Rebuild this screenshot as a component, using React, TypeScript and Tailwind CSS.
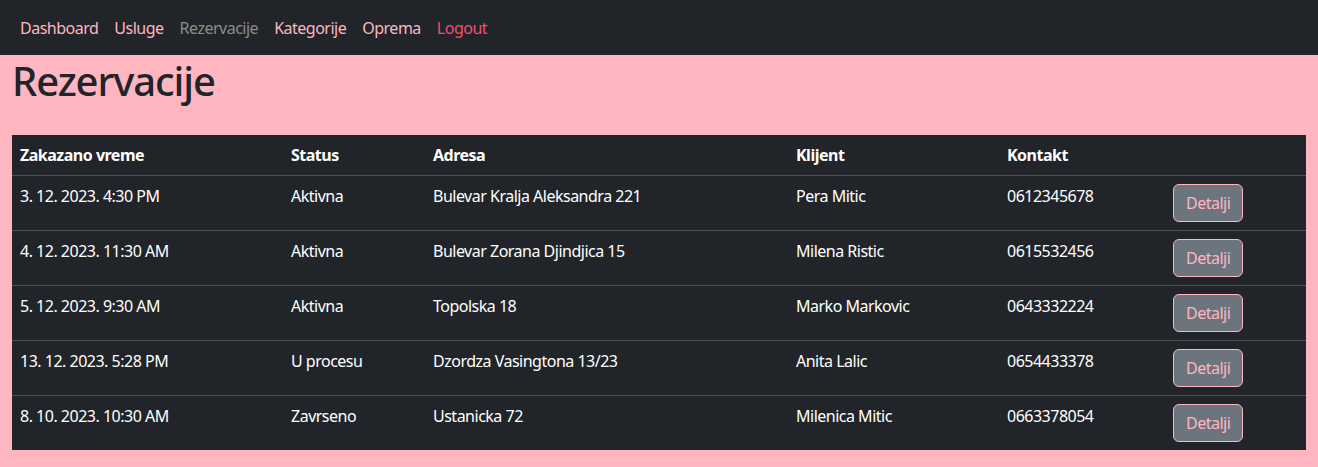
import React from 'react';

const reservations = [
  { time: '3. 12. 2023. 4:30 PM', status: 'Aktivna', address: 'Bulevar Kralja Aleksandra 221', client: 'Pera Mitic', phone: '0612345678' },
  { time: '4. 12. 2023. 11:30 AM', status: 'Aktivna', address: 'Bulevar Zorana Djindjica 15', client: 'Milena Ristic', phone: '0615532456' },
  { time: '5. 12. 2023. 9:30 AM', status: 'Aktivna', address: 'Topolska 18', client: 'Marko Markovic', phone: '0643332224' },
  { time: '13. 12. 2023. 5:28 PM', status: 'U procesu', address: 'Dzordza Vasingtona 13/23', client: 'Anita Lalic', phone: '0654433378' },
  { time: '8. 10. 2023. 10:30 AM', status: 'Zavrseno', address: 'Ustanicka 72', client: 'Milenica Mitic', phone: '0663378054' },
];

const navLinks = [
  { label: 'Dashboard', cls: 'text-[#ffb6c1]' },
  { label: 'Usluge', cls: 'text-[#ffb6c1]' },
  { label: 'Rezervacije', cls: 'text-[#8c8c8c]' },
  { label: 'Kategorije', cls: 'text-[#ffb6c1]' },
  { label: 'Oprema', cls: 'text-[#ffb6c1]' },
  { label: 'Logout', cls: 'text-[#f0506e]' },
];

export default function App() {
  return (
    <div className="min-h-[467px] bg-[#ffb6c1] font-['Noto_Sans',sans-serif] text-base leading-6 tracking-[-0.5px]">
      {/* Navbar */}
      <nav className="h-[55px] bg-[#212529] flex items-center px-3">
        {navLinks.map((l) => (
          <a key={l.label} href="#" className={`px-2 ${l.cls}`}>
            {l.label}
          </a>
        ))}
      </nav>

      {/* Content */}
      <div className="px-3">
        <h1 className="text-[40px] leading-[48px] font-medium tracking-[-1.1px] text-[#212529] pt-[2px] mb-[30px]">Rezervacije</h1>

        <table className="w-full table-fixed border-collapse bg-[#212529] text-white">
          <colgroup>
            <col className="w-[271px]" />
            <col className="w-[142px]" />
            <col className="w-[363px]" />
            <col className="w-[211px]" />
            <col className="w-[166px]" />
            <col />
          </colgroup>
          <thead>
            <tr className="border-b border-[#4d5154]">
              <th className="text-left font-bold px-2 py-2">Zakazano vreme</th>
              <th className="text-left font-bold px-2 py-2">Status</th>
              <th className="text-left font-bold px-2 py-2">Adresa</th>
              <th className="text-left font-bold px-2 py-2">Klijent</th>
              <th className="text-left font-bold px-2 py-2">Kontakt</th>
              <th className="px-2 py-2"></th>
            </tr>
          </thead>
          <tbody>
            {reservations.map((r, i) => (
              <tr key={i} className={i < reservations.length - 1 ? 'border-b border-[#4d5154]' : ''}>
                <td className="align-top px-2 py-2">{r.time}</td>
                <td className="align-top px-2 py-2">{r.status}</td>
                <td className="align-top px-2 py-2">{r.address}</td>
                <td className="align-top px-2 py-2">{r.client}</td>
                <td className="align-top px-2 py-2">{r.phone}</td>
                <td className="align-top px-2 py-2">
                  <button className="bg-[#6c757d] text-[#ffb6c1] border border-[#ffb6c1] rounded-[6px] px-3 py-[6px] leading-6">
                    Detalji
                  </button>
                </td>
              </tr>
            ))}
          </tbody>
        </table>
      </div>
    </div>
  );
}
